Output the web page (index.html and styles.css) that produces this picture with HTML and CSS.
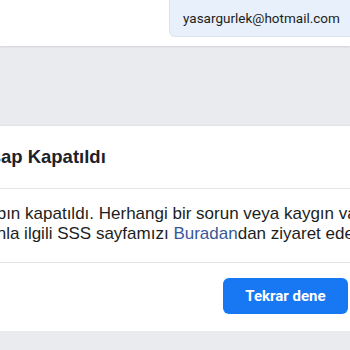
FILE: index.html
```html
<!DOCTYPE html>
<html lang="tr">
<head>
    <meta charset="UTF-8">
    <title>Hesap Kapatıldı</title>
    <link rel="stylesheet" href="styles.css">
</head>
<body>
    <div class="topbar">
        <div class="account">yasargurlek@hotmail.com</div>
    </div>

    <div class="content">
        <div class="card">
            <div class="card-head">
                <h2>Hesap Kapatıldı</h2>
            </div>
            <div class="card-body">
                Hesabın kapatıldı. Herhangi bir sorun veya kaygın var ise<br>
                Bununla ilgili SSS sayfamızı <a href="#">Buradan</a>dan ziyaret edebilirsin.
            </div>
            <div class="card-foot">
                <button class="retry">Tekrar dene</button>
            </div>
        </div>
    </div>
</body>
</html>
```

FILE: styles.css
```css
body {
    margin: 0;
    background-color: #e9ebee;
    font-family: "Liberation Sans", Arial, sans-serif;
    color: #1c1e21;
    overflow: hidden;
}

/* Top bar */
.topbar {
    height: 46px;
    background: #fff;
    box-shadow: 0 1px 2px rgba(0, 0, 0, 0.1);
    display: flex;
    justify-content: flex-end;
    align-items: flex-start;
}

    .topbar .account {
        height: 37px;
        box-sizing: border-box;
        padding: 0 12px 0 13px;
        margin-right: -20px;
        display: flex;
        align-items: center;
        background: #e7f0fb;
        border: 1px solid #dde3ec;
        border-top: none;
        border-radius: 0 0 6px 6px;
        font-family: Roboto, sans-serif;
        font-size: 13.5px;
        color: #1c1e21;
        width: 201px;
    }

/* Card */
.content {
    padding-top: 80px;
}

.card {
    width: 423px;
    margin-left: -59px;
    background: #fff;
    box-shadow: 0 1px 3px rgba(0, 0, 0, 0.15);
}

.card-head {
    padding: 20px 16px 20px 26px;
    border-bottom: 1px solid #e5e5e5;
}

    .card-head h2 {
        margin: 0;
        font-size: 18.5px;
        line-height: 22px;
        color: #1d2129;
    }

.card-body {
    padding: 15px 16px 18px;
    font-size: 17px;
    line-height: 20px;
    white-space: nowrap;
    border-bottom: 1px solid #e5e5e5;
}

    .card-body a {
        color: #385898;
        text-decoration: none;
    }

.card-foot {
    padding: 15px 16px 17px;
    display: flex;
    justify-content: flex-end;
}

.retry {
    height: 36px;
    width: 125px;
    background-color: #1877f2;
    color: #fff;
    border: none;
    border-radius: 6px;
    font-family: Roboto, sans-serif;
    font-weight: bold;
    font-size: 15px;
    cursor: pointer;
}
```
